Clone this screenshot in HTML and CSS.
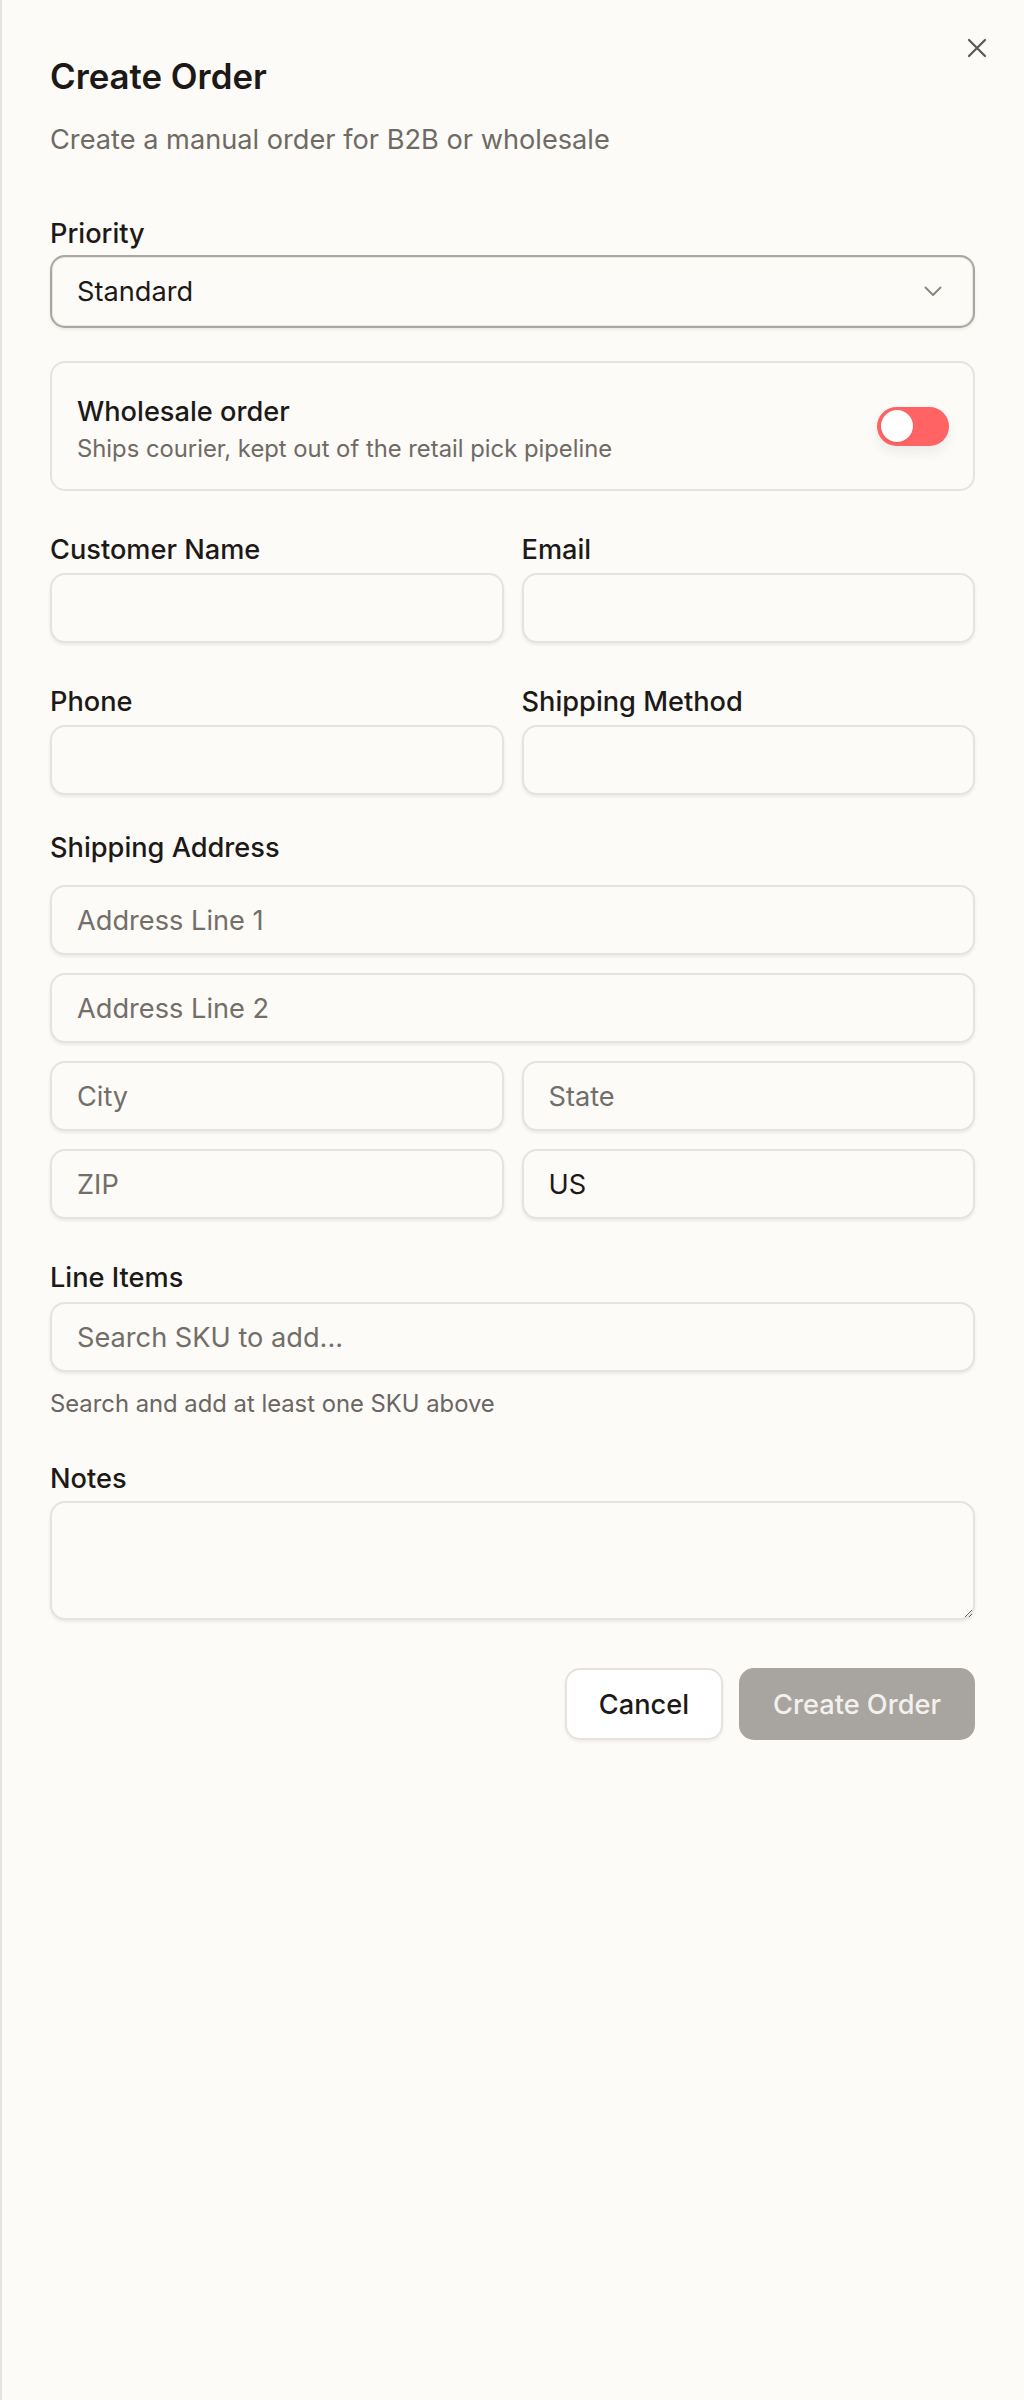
FILE: index.html
```html
<!DOCTYPE html>
<html lang="en">
<head>
    <meta charset="UTF-8">
    <meta name="viewport" content="width=device-width, initial-scale=1.0">
    <title>Create Order</title>
    <link rel="stylesheet" href="styles.css">
</head>
<body>
    <aside class="sheet">
        <button class="close-btn" type="button" aria-label="Close">
            <svg viewBox="0 0 20 20" width="20" height="20" fill="none" stroke="currentColor" stroke-width="2.2" stroke-linecap="round">
                <path d="M2 2 L18 18 M18 2 L2 18"/>
            </svg>
        </button>

        <header class="sheet-header">
            <h2>Create Order</h2>
            <p>Create a manual order for B2B or wholesale</p>
        </header>

        <form class="order-form">
            <div class="field field-priority">
                <label>Priority</label>
                <button class="select" type="button">
                    <span>Standard</span>
                    <svg viewBox="0 0 18 11" width="18" height="11" fill="none" stroke="currentColor" stroke-width="2" stroke-linecap="round" stroke-linejoin="round">
                        <path d="M1.5 1.5 L9 9 L16.5 1.5"/>
                    </svg>
                </button>
            </div>

            <div class="switch-card">
                <div class="switch-text">
                    <strong>Wholesale order</strong>
                    <span>Ships courier, kept out of the retail pick pipeline</span>
                </div>
                <span class="toggle"><span class="knob"></span></span>
            </div>

            <div class="row">
                <div class="field">
                    <label>Customer Name</label>
                    <input type="text">
                </div>
                <div class="field">
                    <label>Email</label>
                    <input type="email">
                </div>
            </div>

            <div class="row">
                <div class="field">
                    <label>Phone</label>
                    <input type="text">
                </div>
                <div class="field">
                    <label>Shipping Method</label>
                    <input type="text">
                </div>
            </div>

            <div class="address">
                <label>Shipping Address</label>
                <div class="address-grid">
                    <input class="wide" type="text" placeholder="Address Line 1">
                    <input class="wide" type="text" placeholder="Address Line 2">
                    <input type="text" placeholder="City">
                    <input type="text" placeholder="State">
                    <input type="text" placeholder="ZIP">
                    <input type="text" value="US">
                </div>
            </div>

            <div class="field field-items">
                <label>Line Items</label>
                <input type="text" placeholder="Search SKU to add...">
                <p class="hint">Search and add at least one SKU above</p>
            </div>

            <div class="field field-notes">
                <label>Notes</label>
                <textarea></textarea>
            </div>

            <div class="actions">
                <button class="btn btn-outline" type="button">Cancel</button>
                <button class="btn btn-primary" type="button" disabled>Create Order</button>
            </div>
        </form>
    </aside>
</body>
</html>
```

FILE: styles.css
```css
/* Base */
body {
    margin: 0;
    background-color: #fcfbf8;
    color: #1c1917;
    font-family: Inter, "Noto Sans", sans-serif;
    font-size: 27.2px;
}

/* Side sheet */
.sheet {
    position: relative;
    box-sizing: border-box;
    min-height: 100vh;
    border-left: 2px solid #e7e4df;
    padding: 56px 49px 48px 48px;
}

.close-btn {
    position: absolute;
    top: 38px;
    right: 37px;
    width: 20px;
    height: 20px;
    padding: 0;
    border: none;
    background: none;
    color: #5c5752;
    cursor: pointer;
}

.close-btn svg {
    display: block;
}

/* Header */
.sheet-header h2 {
    margin: 0;
    font-size: 34.8px;
    line-height: 40px;
    font-weight: 600;
}

.sheet-header p {
    margin: 24px 0 0;
    font-size: 27.2px;
    line-height: 40px;
    color: #6f6a64;
}

/* Fields */
.order-form label {
    display: block;
    font-size: 27.2px;
    line-height: 34px;
    font-weight: 500;
    margin-bottom: 6px;
}

.field-priority {
    margin-top: 57px;
}

.field-priority label {
    margin-bottom: 4px;
}

.order-form input,
.order-form textarea {
    display: block;
    box-sizing: border-box;
    width: 100%;
    height: 70px;
    margin: 0;
    padding: 0 25px;
    border: 2px solid #e6e3de;
    border-radius: 15px;
    background-color: #fcfbf8;
    box-shadow: 0 2px 3px rgba(60, 50, 40, 0.09);
    font-family: inherit;
    font-size: 27.2px;
    color: #1c1917;
    outline: none;
}

.order-form input::placeholder {
    color: #736e68;
}

.select {
    display: flex;
    align-items: center;
    justify-content: space-between;
    box-sizing: border-box;
    width: 100%;
    height: 73px;
    padding: 0 31px 0 25px;
    border: 2px solid #aaa6a0;
    border-radius: 15px;
    background-color: #fcfbf8;
    box-shadow: inset 0 0 0 1px #e9e6e1, 0 2px 3px rgba(60, 50, 40, 0.08);
    font-family: inherit;
    font-size: 27.2px;
    color: #1c1917;
    cursor: pointer;
}

.select svg {
    color: #8b8681;
}

/* Wholesale switch card */
.switch-card {
    display: flex;
    align-items: center;
    justify-content: space-between;
    box-sizing: border-box;
    height: 130px;
    margin-top: 33px;
    padding: 0 24px 0 25px;
    border: 2px solid #e6e3de;
    border-radius: 15px;
}

.switch-text {
    padding-top: 8px;
}

.switch-text strong {
    display: block;
    font-size: 27.2px;
    line-height: 34px;
    font-weight: 500;
}

.switch-text span {
    display: block;
    margin-top: 3px;
    font-size: 23.8px;
    line-height: 34px;
    color: #6f6a64;
}

.toggle {
    display: flex;
    align-items: center;
    box-sizing: border-box;
    width: 72px;
    height: 39px;
    padding: 0 4px;
    border-radius: 20px;
    background-color: #ff6363;
    box-shadow: 0 6px 12px rgba(60, 50, 40, 0.08);
}

.knob {
    width: 32px;
    height: 32px;
    border-radius: 50%;
    background-color: #fff;
    box-shadow: 0 1px 2px rgba(0, 0, 0, 0.1);
}

/* Two column rows */
.row {
    display: grid;
    grid-template-columns: 1fr 1fr;
    gap: 18px;
    margin-top: 42px;
}

.address {
    margin-top: 36px;
}

.address label {
    margin-bottom: 20px;
}

.address-grid {
    display: grid;
    grid-template-columns: 1fr 1fr;
    gap: 18px;
}

.address-grid .wide {
    grid-column: span 2;
}

.field-items {
    margin-top: 42px;
}

.field-items label {
    margin-bottom: 7px;
}

.hint {
    margin: 15px 0 0;
    font-size: 23.8px;
    line-height: 34px;
    color: #6b6661;
}

.field-notes {
    margin-top: 41px;
}

.field-notes label {
    margin-bottom: 5px;
}

.order-form textarea {
    height: 119px;
    padding: 14px 25px;
    resize: vertical;
}

/* Buttons */
.actions {
    display: flex;
    justify-content: flex-end;
    gap: 16px;
    margin-top: 48px;
}

.btn {
    box-sizing: border-box;
    height: 72px;
    padding: 0 32px;
    border-radius: 15px;
    font-family: inherit;
    font-size: 27.2px;
    font-weight: 500;
    cursor: pointer;
}

.btn-outline {
    border: 2px solid #e6e3de;
    background-color: #fff;
    color: #1c1917;
    box-shadow: 0 2px 3px rgba(60, 50, 40, 0.07);
}

.btn-primary {
    padding: 0 34px;
    border: none;
    background-color: #a8a49f;
    color: #f3f1ed;
}

.btn-primary:disabled {
    cursor: not-allowed;
}
```
